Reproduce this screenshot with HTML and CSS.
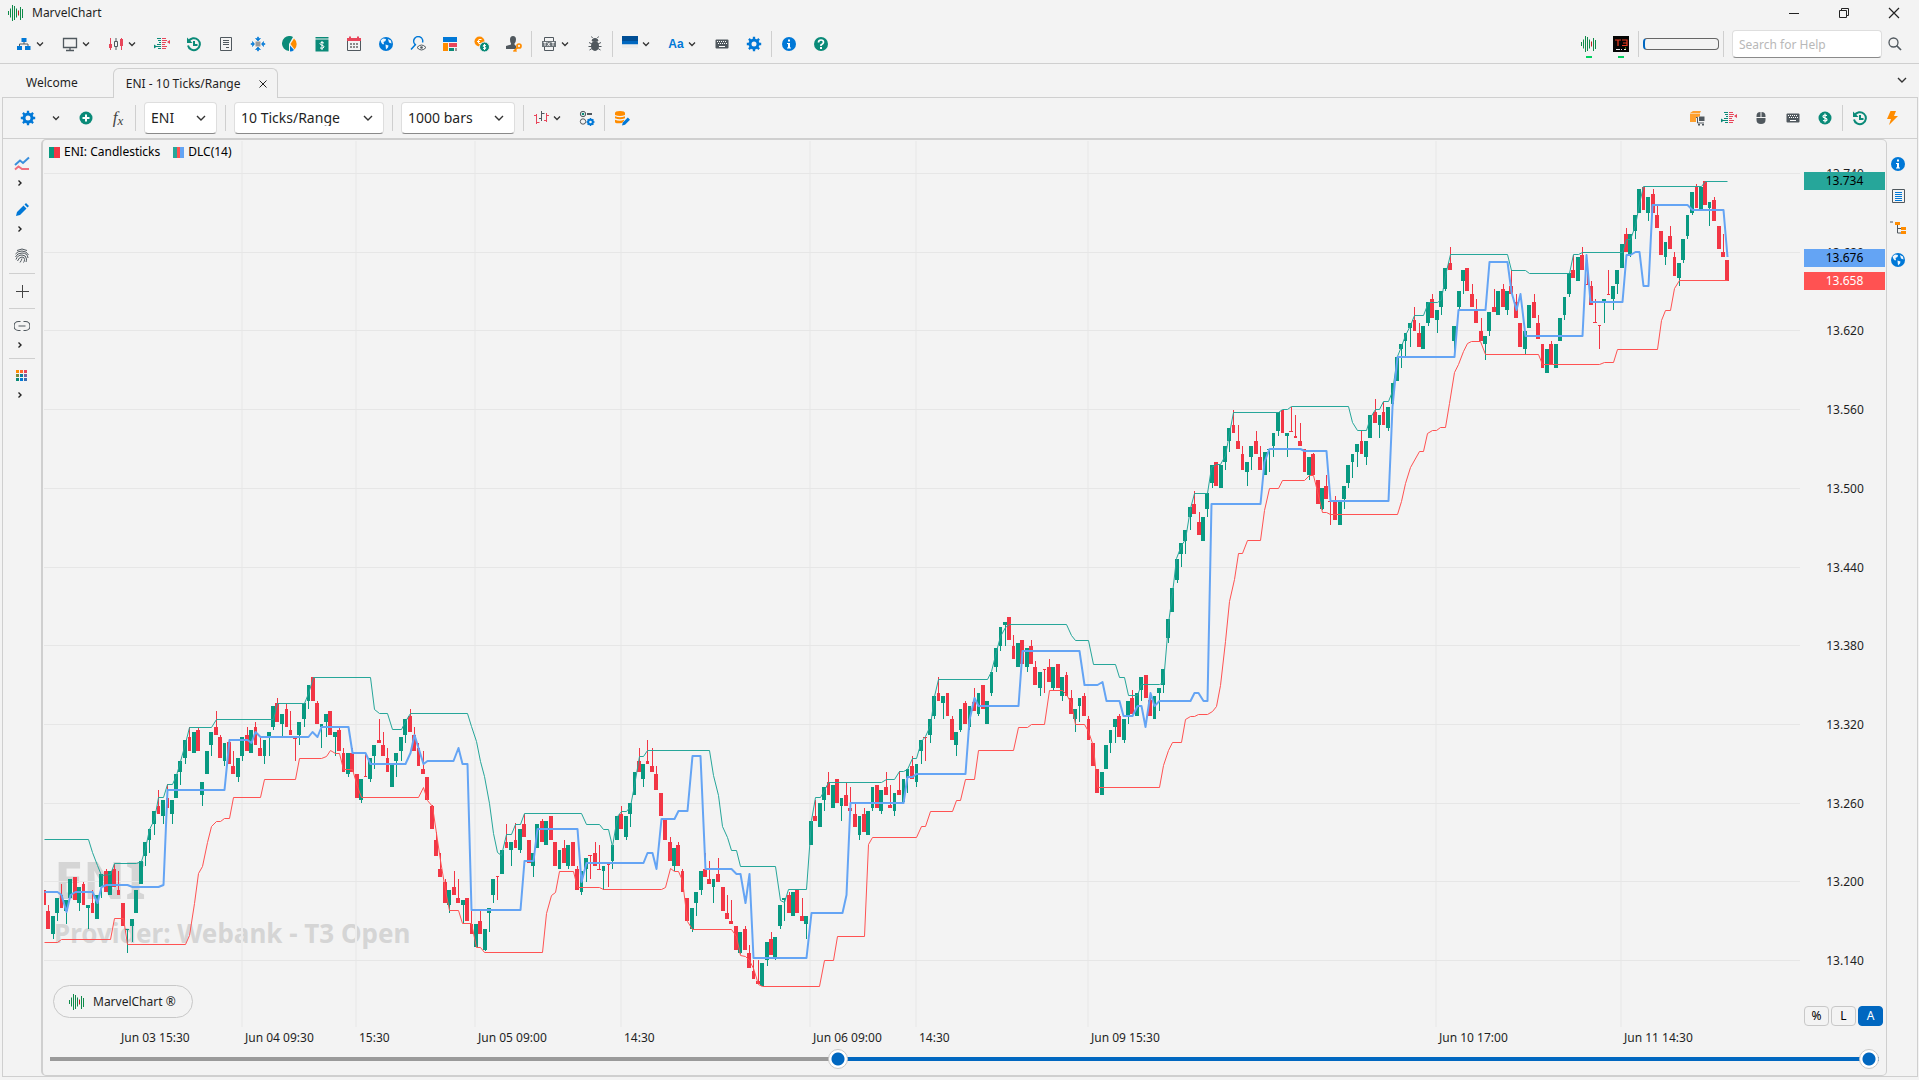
FILE: index.html
```html
<!DOCTYPE html>
<html lang="en">
<head>
<meta charset="utf-8">
<title>MarvelChart</title>
<link rel="stylesheet" href="styles.css">
</head>
<body>
<svg class="sprite" aria-hidden="true">
  <symbol id="wave" viewBox="0 0 16 16"><path d="M.5 6v4M2.500 3.500v9M4.500 0v16M6.500 1v14M8.500 3.500v9M12.500 2v13M14.500 4v9" stroke="#0f8a4a"/><path d="M10.500 5.500v5" stroke="#c02020"/></symbol>
  <symbol id="down" viewBox="0 0 8 8"><path d="M1 2.500 4 5.500 7 2.500" fill="none" stroke="#333" stroke-width="1.300"/></symbol>
  <symbol id="right" viewBox="0 0 8 8"><path d="M2.500 1.500 5 4 2.500 6.500" fill="none" stroke="#222" stroke-width="1.400"/></symbol>
  <symbol id="tree" viewBox="0 0 16 16"><path d="M5.500 2h5v4h-5zM1 10h5v4H1zM9 10h5.500v4H9z" fill="#0078d7"/><path d="M8 6v2M3.500 10V8h8.500v2" fill="none" stroke="#50585e"/></symbol>
  <symbol id="monitor" viewBox="0 0 16 16"><path d="M1.500 2.500h13v9h-13zM8 12v2M4 14.500h8" fill="none" stroke="#50585e" stroke-width="1.300"/></symbol>
  <symbol id="candles" viewBox="0 0 16 16"><path d="M2.500 2v12M13.500 2v12" stroke="#e8455a"/><path d="M1 8h3v4H1zM12 3h3v7h-3z" fill="#e8455a"/><path d="M6.500 5.500h3v5h-3zM8 2v3M8 11v3" fill="none" stroke="#50585e"/></symbol>
  <symbol id="depth" viewBox="0 0 16 16"><path d="M3 2.500h4M4 4.500h3M5 6.500h2M3 8.500h4M2 10.500h5M4 12.500h3" stroke="#0a8a78"/><path d="M8 2.500h4M8 4.500h5M8 6.500h4M8 8.500h3M8 10.500h5M8 12.500h4" stroke="#e8455a"/><path d="M0 8.500 3 10.500 0 12.500z" fill="#0a8a78"/><path d="M16 4 13 6 16 8z" fill="#e8455a"/></symbol>
  <symbol id="history" viewBox="0 0 16 16"><path d="M2.500 5.500A6 6 0 1 1 2 9.500M8 5v4h3.500" fill="none" stroke="#0a8a78" stroke-width="2"/><path d="M1 1.500V7h5.500z" fill="#0a8a78"/></symbol>
  <symbol id="doc" viewBox="0 0 16 16"><path d="M2.500 1.500h11v13h-11zM5 4.500h6M5 6.500h6M5 8.500h6M8 11.500h3" fill="none" stroke="#50585e"/></symbol>
  <symbol id="move" viewBox="0 0 16 16"><path d="M5.500 5.500h5v5h-5z" fill="#9a9a9a"/><path d="M8 5 5.500 2.500H7.500V1h1v1.500h2zM8 11l2.500 2.500H8.500V15h-1v-1.500h-2zM4.500 8 2.500 5.500V7.500H1v1h1.500v2zM11.500 8l2-2.500V7.500H15v1h-1.500v2z" fill="#0078d7" stroke="#0078d7" stroke-width=".6"/></symbol>
  <symbol id="pie" viewBox="0 0 16 16"><path d="M8 0a7.500 7.500 0 0 0-1 15V8l4-7Q9.500 0 8 0z" fill="#0a8a78"/><path d="M12 2.500 8.500 8l4 5.500a7.500 7.500 0 0 0-.5-11z" fill="#ff8c00"/><path d="M8 9.500V15.500q2.500 0 4-1.500z" fill="#0078d7"/></symbol>
  <symbol id="money" viewBox="0 0 16 16"><path d="M1.500 1h13v1.500h-13zM1.500 3.500h13v12h-13z" fill="#0a8a78"/><path d="M10 7Q6 5.500 6 7.500q0 1.300 2 1.700 2 .5 2 1.600Q10 13 6 12M8 5v9" fill="none" stroke="#fff"/></symbol>
  <symbol id="calendar" viewBox="0 0 16 16"><path d="M1.500 4.500h13v10h-13z" fill="none" stroke="#50585e"/><path d="M1 2h14v3H1zM3 .5h2v2H3zM11 .5h2v2h-2z" fill="#e8455a"/><path d="M4 7h2v2H4zM7 7h2v2H7zM10 7h2v2h-2zM4 10h2v2H4zM7 10h2v2H7zM10 10h2v2h-2z" fill="#8a8a8a"/></symbol>
  <symbol id="globe" viewBox="0 0 16 16"><circle cx="8" cy="8" r="7" fill="#0078d7"/><path d="M2.500 4.500 5 2.500l3 .5-.5 2L5.500 6 6 8l-1 .5L3.500 7zM7.500 8.500l3 1-.5 2L8 13.500zM10 3l3 1.500.5 3-2.500-1z" fill="#eef6fd"/></symbol>
  <symbol id="lookup" viewBox="0 0 16 16"><path d="M6 9A4.500 4.500 0 1 1 12.500 6.500M5.500 8.500 1 13.500" fill="none" stroke="#0078d7" stroke-width="1.500"/><path d="M7 11.500q4.500-5 9 0-4.500 5-9 0z" fill="#f3f3f3" stroke="#50585e"/><circle cx="11.500" cy="11.500" r="1.300" fill="#50585e"/></symbol>
  <symbol id="blocks" viewBox="0 0 16 16"><path d="M1 1h14v5H1z" fill="#0078d7"/><path d="M1 7h5v8H1z" fill="#ff8c00"/><path d="M7 7h8v4H7z" fill="#e8455a"/><path d="M7 12h5v3H7z" fill="#0a8a78"/><path d="M13 12h2v3h-2z" fill="#999"/></symbol>
  <symbol id="coins" viewBox="0 0 16 16"><circle cx="5.500" cy="5.500" r="5" fill="#ff8c00"/><path d="M7.500 3.500Q4 2.500 4 5.500t3.500 2M3 5.500h3" fill="none" stroke="#fff"/><circle cx="10.500" cy="11" r="5" fill="#0a8a78" stroke="#f3f3f3"/><path d="M12 9.500Q9 8.500 9 10q0 .8 1.500 1T12 12q0 1.500-3 .5M10.500 8v6" fill="none" stroke="#fff"/></symbol>
  <symbol id="userkey" viewBox="0 0 16 16"><path d="M4 3.500a3 3.500 0 0 1 6 0Q10 6 8.500 7.500v1L10 10v3H0v-3l5-1.500v-1Q4 6 4 3.500z" fill="#50585e"/><circle cx="13" cy="10" r="2" fill="none" stroke="#ff8c00" stroke-width="1.700"/><path d="m11.500 11.500-4 4M9 14l1.500 1.500" stroke="#ff8c00" stroke-width="1.700"/></symbol>
  <symbol id="textfile" viewBox="0 0 16 16"><path d="M3.500 5V1.500h9V5M3.500 11v3.500h9V11" fill="none" stroke="#50585e"/><path d="M1 5h14v6H1z" fill="#6b7277"/><path d="M2.500 6.500h3M4 6.500V10M6.500 6.500 9 10M9 6.500 6.500 10M10.500 6.500h3M12 6.500V10" stroke="#fff" stroke-width=".9"/></symbol>
  <symbol id="bug" viewBox="0 0 16 16"><ellipse cx="8" cy="10" rx="4" ry="5" fill="#50585e"/><path d="M5 5a3 2.500 0 0 1 6 0zM5.500 2 4.500.500M10.500 2l1-1.500M2 6.500l3 1.500M14 6.500l-3 1.500M1.500 10.500h13M2.500 14 5 12.500M13.500 14l-2.500-1.500" fill="#50585e" stroke="#50585e"/></symbol>
  <symbol id="skin" viewBox="0 0 16 12"><path d="M0 0h16v5H0z" fill="#004e95"/><path d="M0 5h16v3.500H0z" fill="#0067c0"/><path d="M0 8.500h16V12H0z" fill="#ececec"/></symbol>
  <symbol id="keyboard" viewBox="0 0 16 16"><rect x="1.500" y="3.500" width="13" height="9" rx="1" fill="#50585e"/><path d="M3 5.500h10M4 7.500h9" stroke="#fff" stroke-dasharray="1 1"/><path d="M5 10.500h6" stroke="#fff"/></symbol>
  <symbol id="gear" viewBox="0 0 16 16"><circle cx="8" cy="8" r="4" fill="none" stroke="#0078d7" stroke-width="3"/><path d="M8 .8v3M8 12.200v3M.8 8h3M12.200 8h3M2.900 2.900 5 5M11 11l2.100 2.100M2.900 13.100 5 11M11 5l2.100-2.100" stroke="#0078d7" stroke-width="2.300"/></symbol>
  <symbol id="info" viewBox="0 0 16 16"><circle cx="8" cy="8" r="7" fill="#0078d7"/><path d="M7 3.500h2v2H7zM6 7h3v4.500h1v1H6v-1h1V8H6z" fill="#fff"/></symbol>
  <symbol id="help" viewBox="0 0 16 16"><circle cx="8" cy="8" r="7" fill="#0a8a78"/><path d="M5.500 6.500Q5.500 4 8 4t2.500 2.200Q10.500 7.500 8 9v1" fill="none" stroke="#fff" stroke-width="1.700"/><path d="M7 11h2v2H7z" fill="#fff"/></symbol>
  <symbol id="provider" viewBox="0 0 16 16"><path d="M0 0h16v16H0z" fill="#050505"/><path d="M2 4h6M5 4v6M9 4h5v5.500H9M10 7h4" fill="none" stroke="#e83a20" stroke-width="1.200"/><path d="M3 13.500h4M8 13.500h1M11 13.500h2" stroke="#eee"/><path d="M12 12h1" stroke="#9bd000"/></symbol>
  <symbol id="search" viewBox="0 0 16 16"><circle cx="6.500" cy="6.500" r="4.500" fill="none" stroke="#50585e" stroke-width="1.300"/><path d="m9.500 9.500 4.500 4.500" stroke="#50585e" stroke-width="1.700"/></symbol>
  <symbol id="plus" viewBox="0 0 16 16"><circle cx="8" cy="8" r="6.500" fill="#0a8a78"/><path d="M8 4.500v7M4.500 8h7" stroke="#fff" stroke-width="2"/></symbol>
  <symbol id="ohlc" viewBox="0 0 16 16"><path d="M3.500 4v10M1 5.500h2M4 12.500h2.500M13.500 3v9M11 10.500h2.500M14 5.500h2" stroke="#e8455a"/><path d="M8.500 1v10M6 8.500h2M9 3.500h2.500" stroke="#50585e"/></symbol>
  <symbol id="options" viewBox="0 0 16 16"><circle cx="4" cy="4" r="2.700" fill="none" stroke="#50585e"/><circle cx="4" cy="4" r="1.300" fill="#0a8a78"/><circle cx="4" cy="11.500" r="2.700" fill="none" stroke="#50585e"/><path d="M8 4h5" stroke="#50585e" stroke-width="2"/><circle cx="11.500" cy="12" r="2.300" fill="none" stroke="#0078d7" stroke-width="2"/><path d="M11.500 8v1.500M11.500 14.500V16M7.500 12H9M14 12h1.500M8.700 9.200l1.100 1.100M13.200 13.700l1.100 1.100M8.700 14.800l1.100-1.100M13.200 10.300l1.100-1.100" stroke="#0078d7" stroke-width="1.500"/></symbol>
  <symbol id="dbedit" viewBox="0 0 16 16"><path d="M1 3Q1 1 6 1t5 2v2Q6 7 1 5zM1 6.300q5 2 10 0v2q-5 2-10 0zM1 9.800q5 2 9 0v1L8 13Q1 14 1 12z" fill="#ff8c00"/><path d="m8 15.500.8-3 5-5 2.200 2.200-5 5z" fill="#0078d7"/></symbol>
  <symbol id="order" viewBox="0 0 16 16"><path d="M1 3 4 1h8l-1 2v3L7 8v4H1z" fill="#ffa02e"/><path d="M1 3.500h10" stroke="#f8d0a0"/><path d="M7 7.500h1.500V13H15" fill="none" stroke="#50585e"/><path d="M10 6.500h5.500V11H10z" fill="#50585e"/><path d="M9 14h2v1.500H9zM13 14h2v1.500h-2z" fill="#50585e"/></symbol>
  <symbol id="mouse" viewBox="0 0 16 16"><path d="M3.500 7V6Q3.500 2 7.500 2v5zM8.500 2q4 0 4 4v1h-4zM3.500 8h9v2q0 4-4.500 4T3.500 10z" fill="#50585e"/></symbol>
  <symbol id="dollar" viewBox="0 0 16 16"><circle cx="8" cy="8" r="6.500" fill="#0a8a78"/><path d="M10 5.500Q6 4.500 6 6.500 6 7.600 8 8t2 1.700q0 1.800-4 .8M8 3.500v9" fill="none" stroke="#fff" stroke-width="1.200"/></symbol>
  <symbol id="bolt" viewBox="0 0 16 16"><path d="M6.500 1H12L10 6h4L5 15l2-6H3z" fill="#ff8c00"/></symbol>
  <symbol id="lines" viewBox="0 0 16 16"><path d="M1 9 6 4.500 9 7l6-5.500" fill="none" stroke="#3a8fdc" stroke-width="2"/><path d="M1 13.500 4.500 10.500 8 13h7" fill="none" stroke="#f06e7e" stroke-width="2"/></symbol>
  <symbol id="pencil" viewBox="0 0 16 16"><path d="m2 14 1-4 6.500-6.500 3 3L6 13zM10.500 2.500 12 1l3 3-1.500 1.500z" fill="#0078d7"/></symbol>
  <symbol id="finger" viewBox="0 0 16 16"><path d="M3 2.500q5-3 10 0M1.500 6Q3.500 3 8 3t6.500 4M1.500 9Q3 5 8 5q5.500 0 6 5M2 11.500Q3.500 7 8 7q4 0 4.500 4 0 2-.5 3M3.500 13Q5 9 8 9q2.500 0 2.500 2.500 0 2-1 3M6 14.500q1.500-2 2-4" fill="none" stroke="#50585e"/></symbol>
  <symbol id="cross" viewBox="0 0 16 16"><path d="M8.500 2v13M2 8.500h13" stroke="#444"/></symbol>
  <symbol id="link" viewBox="0 0 16 16"><path d="M6.500 3.500h-2a4.500 4.500 0 0 0 0 9h2M9.500 3.500h2a4.500 4.500 0 0 1 0 9h-2M4.500 8h7" fill="none" stroke="#50585e" stroke-width="1.200"/></symbol>
  <symbol id="palette" viewBox="0 0 16 16"><path d="M2 2h3v3H2z" fill="#ff8c00"/><path d="M6 2h3v3H6z" fill="#ff6a2b"/><path d="M10 2h3v3h-3z" fill="#e8455a"/><path d="M2 6h3v3H2z" fill="#7d8b3c"/><path d="M6 6h3v3H6z" fill="#0a809a"/><path d="M10 6h3v3h-3z" fill="#7a62a0"/><path d="M2 10h3v3H2z" fill="#0a8a78"/><path d="M6 10h3v3H6z" fill="#0078d7"/><path d="M10 10h3v3h-3z" fill="#3a6db0"/></symbol>
  <symbol id="list" viewBox="0 0 16 16"><path d="M2.500 1.500h12v13h-12z" fill="none" stroke="#50585e"/><path d="M5 4.500h7M5 6.500h7M5 8.500h7M5 10.500h7M5 12.500h7" stroke="#0078d7"/></symbol>
  <symbol id="hierarchy" viewBox="0 0 16 16"><path d="M0 2h3M7.500 5v8H11M7.500 8.500H11" fill="none" stroke="#50585e"/><path d="M5 2h5v3H5zM11 7h5v3h-5zM11 11h5v3h-5z" fill="#ff8c00"/></symbol>
</svg>

<header class="titlebar">
  <svg class="icon"><use href="#wave"/></svg>
  <h1 class="app-name">MarvelChart</h1>
  <button class="win-btn" aria-label="Minimize"><svg class="icon" viewBox="0 0 16 16"><path d="M3 8.500h10" stroke="#222"/></svg></button>
  <button class="win-btn" aria-label="Restore"><svg class="icon" viewBox="0 0 16 16"><path d="M3.500 5.500h7v7h-7zM5.500 5V3.500h7v7H11" fill="none" stroke="#222"/></svg></button>
  <button class="win-btn" aria-label="Close"><svg class="icon" viewBox="0 0 16 16"><path d="m3 3 10 10M13 3 3 13" stroke="#222" stroke-width="1.200"/></svg></button>
</header>

<nav class="toolbar main-tools" aria-label="Main">
  <button class="tool drop" aria-label="Workspace"><svg class="icon"><use href="#tree"/></svg><svg class="chev"><use href="#down"/></svg></button>
  <button class="tool drop" aria-label="Display"><svg class="icon"><use href="#monitor"/></svg><svg class="chev"><use href="#down"/></svg></button>
  <button class="tool drop" aria-label="Charts"><svg class="icon"><use href="#candles"/></svg><svg class="chev"><use href="#down"/></svg></button>
  <button class="tool" aria-label="Market depth"><svg class="icon"><use href="#depth"/></svg></button>
  <button class="tool" aria-label="History"><svg class="icon"><use href="#history"/></svg></button>
  <button class="tool" aria-label="Log"><svg class="icon"><use href="#doc"/></svg></button>
  <button class="tool" aria-label="Arrange"><svg class="icon"><use href="#move"/></svg></button>
  <button class="tool" aria-label="Portfolio"><svg class="icon"><use href="#pie"/></svg></button>
  <button class="tool" aria-label="Account"><svg class="icon"><use href="#money"/></svg></button>
  <button class="tool" aria-label="Calendar"><svg class="icon"><use href="#calendar"/></svg></button>
  <button class="tool" aria-label="Web"><svg class="icon"><use href="#globe"/></svg></button>
  <button class="tool" aria-label="Symbol lookup"><svg class="icon"><use href="#lookup"/></svg></button>
  <button class="tool" aria-label="Heat map"><svg class="icon"><use href="#blocks"/></svg></button>
  <button class="tool" aria-label="Currencies"><svg class="icon"><use href="#coins"/></svg></button>
  <button class="tool" aria-label="Credentials"><svg class="icon"><use href="#userkey"/></svg></button>
  <span class="sep"></span>
  <button class="tool drop" aria-label="Text files"><svg class="icon"><use href="#textfile"/></svg><svg class="chev"><use href="#down"/></svg></button>
  <button class="tool" aria-label="Debug"><svg class="icon"><use href="#bug"/></svg></button>
  <span class="sep"></span>
  <button class="tool drop" aria-label="Skin"><svg class="icon skin"><use href="#skin"/></svg><svg class="chev"><use href="#down"/></svg></button>
  <button class="tool drop font-tool"><span class="aa">Aa</span><svg class="chev"><use href="#down"/></svg></button>
  <button class="tool" aria-label="Shortcuts"><svg class="icon"><use href="#keyboard"/></svg></button>
  <button class="tool" aria-label="Settings"><svg class="icon"><use href="#gear"/></svg></button>
  <span class="sep"></span>
  <button class="tool" aria-label="About"><svg class="icon"><use href="#info"/></svg></button>
  <button class="tool" aria-label="Help"><svg class="icon"><use href="#help"/></svg></button>
  <div class="spacer"></div>
  <button class="tool online" aria-label="MarvelChart feed"><svg class="icon"><use href="#wave"/></svg></button>
  <button class="tool online" aria-label="T3 feed"><svg class="icon"><use href="#provider"/></svg></button>
  <span class="sep"></span>
  <div class="progress" role="progressbar" aria-label="Loading" aria-valuenow="2"></div>
  <span class="sep"></span>
  <input class="search" type="search" placeholder="Search for Help" aria-label="Search for Help">
  <button class="tool find" aria-label="Search"><svg class="icon"><use href="#search"/></svg></button>
</nav>

<div class="tabs">
  <button class="tab">Welcome</button>
  <div class="tab active"><button class="tab-label">ENI - 10 Ticks/Range</button><button class="tab-close" aria-label="Close tab"><svg class="chev" viewBox="0 0 8 8"><path d="m.5.5 7 7M7.500.5l-7 7" stroke="#222"/></svg></button></div>
  <div class="spacer"></div>
  <button class="tool tab-list" aria-label="All tabs"><svg class="icon" viewBox="0 0 8 8"><path d="M2 3 4 5 6 3" fill="none" stroke="#333" stroke-width=".7"/></svg></button>
</div>

<main class="panel">
  <nav class="toolbar chart-tools" aria-label="Chart">
    <button class="tool" aria-label="Chart settings"><svg class="icon"><use href="#gear"/></svg></button>
    <button class="tool narrow" aria-label="More settings"><svg class="chev"><use href="#down"/></svg></button>
    <button class="tool" aria-label="Add"><svg class="icon"><use href="#plus"/></svg></button>
    <button class="tool fx" aria-label="Functions"><i>f</i><i class="sub">x</i></button>
    <span class="sep"></span>
    <label class="combo symbol"><select aria-label="Symbol"><option>ENI</option></select><svg class="icon" viewBox="0 0 8 8"><path d="M2 3 4 5 6 3" fill="none" stroke="#333" stroke-width=".7"/></svg></label>
    <span class="sep"></span>
    <label class="combo interval"><select aria-label="Interval"><option>10 Ticks/Range</option></select><svg class="icon" viewBox="0 0 8 8"><path d="M2 3 4 5 6 3" fill="none" stroke="#333" stroke-width=".7"/></svg></label>
    <span class="sep"></span>
    <label class="combo count"><select aria-label="Bars"><option>1000 bars</option></select><svg class="icon" viewBox="0 0 8 8"><path d="M2 3 4 5 6 3" fill="none" stroke="#333" stroke-width=".7"/></svg></label>
    <span class="sep"></span>
    <button class="tool drop" aria-label="Bar style"><svg class="icon"><use href="#ohlc"/></svg><svg class="chev"><use href="#down"/></svg></button>
    <button class="tool" aria-label="Options"><svg class="icon"><use href="#options"/></svg></button>
    <span class="sep"></span>
    <button class="tool" aria-label="Edit data"><svg class="icon"><use href="#dbedit"/></svg></button>
    <div class="spacer"></div>
    <button class="tool" aria-label="Orders"><svg class="icon"><use href="#order"/></svg></button>
    <button class="tool" aria-label="Depth"><svg class="icon"><use href="#depth"/></svg></button>
    <button class="tool" aria-label="Mouse trading"><svg class="icon"><use href="#mouse"/></svg></button>
    <button class="tool" aria-label="Keyboard trading"><svg class="icon"><use href="#keyboard"/></svg></button>
    <button class="tool" aria-label="Positions"><svg class="icon"><use href="#dollar"/></svg></button>
    <span class="sep"></span>
    <button class="tool" aria-label="Replay"><svg class="icon"><use href="#history"/></svg></button>
    <button class="tool" aria-label="Fast trading"><svg class="icon"><use href="#bolt"/></svg></button>
  </nav>

  <div class="workspace">
    <nav class="rail left-rail" aria-label="Drawing">
      <div class="rail-group">
        <button class="rail-btn" aria-label="Trend lines"><svg class="icon"><use href="#lines"/></svg><svg class="chev"><use href="#right"/></svg></button>
        <button class="rail-btn" aria-label="Pencil"><svg class="icon"><use href="#pencil"/></svg><svg class="chev"><use href="#right"/></svg></button>
        <button class="rail-btn" aria-label="Patterns"><svg class="icon"><use href="#finger"/></svg></button>
      </div>
      <span class="rail-sep"></span>
      <button class="rail-btn" aria-label="Crosshair"><svg class="icon"><use href="#cross"/></svg></button>
      <span class="rail-sep"></span>
      <button class="rail-btn" aria-label="Link"><svg class="icon"><use href="#link"/></svg><svg class="chev"><use href="#right"/></svg></button>
      <span class="rail-sep"></span>
      <button class="rail-btn" aria-label="Colours"><svg class="icon"><use href="#palette"/></svg><svg class="chev"><use href="#right"/></svg></button>
    </nav>

    <section class="chart">
      <div class="plot">
        <div class="watermark"><p class="mark-symbol">ENI</p><p class="mark-provider">Provider: Webank - T3 Open</p></div>
        <svg class="canvas" id="canvas" viewBox="43 140 1761 887" preserveAspectRatio="none"></svg>
        <div class="legend">
          <span class="swatch candle-swatch"></span><span class="legend-name">ENI: Candlesticks</span>
          <span class="swatch band-swatch"></span><span>DLC(14)</span>
        </div>
        <button class="brand"><svg class="icon"><use href="#wave"/></svg>MarvelChart ®</button>
      </div>
      <div class="price-axis" id="prices">
        <div class="scale-modes"><button class="mode">%</button><button class="mode">L</button><button class="mode on">A</button></div>
      </div>
      <div class="time-axis" id="times"></div>
      <div class="range">
        <input type="range" min="0" max="1000" value="430" aria-label="First bar">
        <input type="range" min="0" max="1000" value="1000" aria-label="Last bar">
      </div>
    </section>

    <nav class="rail right-rail" aria-label="Panels">
      <button class="side-btn" aria-label="Information"><svg class="icon"><use href="#info"/></svg></button>
      <button class="side-btn" aria-label="List"><svg class="icon"><use href="#list"/></svg></button>
      <button class="side-btn" aria-label="Objects"><svg class="icon"><use href="#hierarchy"/></svg></button>
      <button class="side-btn" aria-label="Web"><svg class="icon"><use href="#globe"/></svg></button>
    </nav>
  </div>
</main>
<script src="chart.js"></script>
</body>
</html>
```
FILE: styles.css
```css
* { box-sizing: border-box; }
body {
  margin: 0;
  height: 100vh;
  display: flex;
  flex-direction: column;
  overflow: hidden;
  background: #f3f3f3;
  color: #1f1f1f;
  font: 12px/16px "Noto Sans", "Open Sans", sans-serif;
}
button, input, select { font: inherit; color: inherit; }
button { border: 0; padding: 0; background: none; }
svg { display: block; }
.sprite { display: none; }
.icon { width: 16px; height: 16px; flex: none; }
.chev { width: 8px; height: 8px; flex: none; }
.spacer { flex: 1; }

.titlebar { display: flex; align-items: center; height: 25px; flex: none; padding-left: 8px; }
.app-name { flex: 1; margin: 0 0 0 8px; font-size: 12px; font-weight: 400; }
.win-btn { width: 50px; height: 25px; display: flex; align-items: center; justify-content: center; }

.toolbar { display: flex; align-items: center; flex: none; border-bottom: 1px solid #cfcfcf; }
.tool { width: 32px; height: 32px; flex: none; display: flex; align-items: center; justify-content: center; }
.drop { width: 46px; justify-content: flex-start; gap: 4px; padding-left: 8px; }
.sep { width: 1px; height: 26px; margin: 0 1px; flex: none; background: #cfcfcf; }
.main-tools { height: 39px; padding: 0 16px 0 8px; }
.skin { height: 12px; margin-bottom: 4px; }
.aa { width: 16px; font-weight: 700; color: #0078d7; font-family: "Liberation Sans", Arial, sans-serif; }
.online { position: relative; }
.online::after { content: ""; position: absolute; left: 13px; bottom: 2px; width: 6px; height: 2px; background: #00d060; }
.progress { width: 76px; height: 12px; margin: 0 3px; border: 1px solid #666; border-left: 2px solid #0067c0; border-radius: 4px; }
.search { width: 150px; height: 28px; margin-left: 7px; padding: 0 6px; border: 1px solid #dedede; border-bottom-color: #8a8a8a; border-radius: 4px; background: #fff; outline: 0; }
.search::placeholder { color: #b8b8b8; opacity: 1; }
.find { width: 21px; justify-content: flex-end; }

.tabs { display: flex; align-items: flex-end; flex: none; height: 33px; padding: 0 1px; }
.tab { height: 29px; padding: 0 35px 0 25px; }
.active { display: flex; align-items: center; position: relative; z-index: 1; height: 30px; margin-bottom: -1px; padding: 0 10px 0 12px; border: 1px solid #cfcfcf; border-bottom: 0; border-radius: 6px 6px 0 0; background: #f3f3f3; }
.tab-close { margin-left: 18px; }
.tab-list { margin-bottom: 1px; }

.panel { flex: 1; min-height: 0; display: flex; flex-direction: column; margin: 0 1px 3px 2px; border: 1px solid #cfcfcf; }
.chart-tools { height: 41px; padding: 0 9px; }
.narrow { width: 26px; padding-right: 2px; }
.fx { font: italic 17px/20px "Liberation Serif", serif; color: #444; }
.fx .sub { font-size: 13px; padding-top: 6px; }
.combo { position: relative; margin: 0 7px; display: block; height: 32px; }
.combo select { width: 100%; height: 100%; appearance: none; padding: 0 6px; border: 1px solid #dedede; border-bottom-color: #8a8a8a; border-radius: 4px; background: #fff; font-size: 14px; }
.combo .icon { position: absolute; right: 8px; top: 8px; pointer-events: none; }
.symbol { width: 73px; }
.interval { width: 150px; }
.count { width: 114px; }

.workspace { flex: 1; min-height: 0; display: flex; }
.rail { flex: none; display: flex; flex-direction: column; }
.left-rail { width: 38px; padding-top: 11px; }
.right-rail { width: 30px; padding-top: 9px; align-items: center; }
.rail-group { display: flex; flex-direction: column; gap: 4px; }
.rail-btn { width: 37px; display: flex; flex-direction: column; align-items: center; gap: 7px; padding: 6px 0 5px; }
.rail-btn .chev { margin-right: 4px; }
.rail-sep { height: 1px; margin: 4px 6px 3px; background: #cfcfcf; }
.side-btn { width: 30px; height: 32px; display: flex; align-items: center; justify-content: center; margin-left: -9px; }

.chart {
  flex: 1;
  min-width: 0;
  display: grid;
  grid-template: minmax(0, 1fr) 22px 26px / minmax(0, 1fr) 82px;
  border: 1px solid #cfcfcf;
  border-left-width: 2px;
  border-radius: 5px;
}
.plot { position: relative; }
.canvas { position: absolute; inset: 0; width: 100%; height: 100%; }
.legend { position: absolute; left: 6px; top: 4px; display: flex; align-items: center; color: #000; }
.swatch { width: 11px; height: 11px; margin-right: 4px; }
.legend-name { margin-right: 13px; }
.candle-swatch { background: linear-gradient(90deg, #089981 50%, #f23645 50%); }
.band-swatch { background: linear-gradient(90deg, #26a69a 33%, #ff5252 33% 66%, #64a4f4 66%); }
.watermark { position: absolute; left: 11px; bottom: 76px; color: #d5d5d5; font-weight: 700; }
.watermark p { margin: 0; white-space: nowrap; }
.mark-symbol { font-size: 52px; line-height: 72px; }
.mark-provider { font-size: 26px; line-height: 36px; }
.brand { position: absolute; left: 10px; bottom: 9px; height: 33px; display: flex; align-items: center; gap: 8px; padding: 0 16px 0 15px; border: 1px solid #c8c8c8; border-radius: 17px; background: #f3f3f3; }
.price-axis { position: relative; }
.price, .tag { position: absolute; left: 0; right: 0; height: 18px; line-height: 18px; margin-top: -8px; text-align: center; }
.tag { right: 1px; margin-top: -9px; color: #000; }
.tag-upper { background: #26a69a; }
.tag-mid { background: #64a4f4; }
.tag-lower { background: #ff5252; color: #fff; }
.scale-modes { position: absolute; left: 0; bottom: 1px; display: flex; gap: 2px; }
.mode { width: 25px; height: 20px; border: 1px solid #c8c8c8; border-radius: 4px; color: #000; }
.mode.on { background: #0067c0; border-color: #0067c0; color: #fff; }
.time-axis { position: relative; grid-column: 1; }
.time { position: absolute; top: 3px; margin-left: 3px; white-space: nowrap; }
.range { grid-column: 1 / -1; display: grid; align-content: start; margin: 0 7px; background: linear-gradient(90deg, #9a9a9a 43%, #0067c0 43%) 0 8px / 100% 4px no-repeat; }
.range input { grid-area: 1 / 1; width: 100%; height: 20px; margin: 0; appearance: none; background: none; pointer-events: none; }
.range input::-webkit-slider-thumb { appearance: none; pointer-events: auto; width: 20px; height: 20px; border: 1px solid #c8c8c8; border-radius: 50%; background: radial-gradient(circle, #0067c0 6px, #fff 7px); }
```
FILE: chart.js
```js
// Series are stored in blocks. Each block has an origin on the chart and
// holds its values in thirds of a chart unit.
// bars: colour, centre, high, body top, body bottom, low
const blocks = [
  { x: 0, y: 660,
    bars: `r133 690 690 735 735,r145 735 753 807 807,g159 768 768 822 837,g171 714 714 759 783,r185 672 705 744 744,g198 720 720 753 792,g211 657 657 714 714,r225 651 651 720 720,g237 681 681 729 753,r251 666 672 735 735,g264 735 735 744 807,r278 690 729 759 759,g291 705 705 777 777,g303 642 642 681 714,r318 627 632 696 696,g330 632 632 705 705,r343 612 627 681 681,r356 632 690 705 705,r369 729 729 798 798,g382 807 807 810 879,g396 777 777 798 846,g409 690 690 759 759,g423 603 603 672 672,g436 546 546 588 618,g449 507 507 540 579,g462 453 453 492 525,r476 390 438 462 462,g489 420 420 468 492,r503 372 414 444 444,g516 420 420 462 492,g528 342 342 414 414,g541 303 303 336 375,g555 240 240 294 312,r569 201 231 273 273,g582 216 216 279 279,r594 201 210 273 273,g607 366 366 405 438,g621 273 273 342 342,g634 216 216 255 288,r648 153 201 225 225,r660 225 231 294 294,g674 249 249 303 318,r687 237 246 312 312,r700 273 318 342 342,g714 294 294 351 366,g727 231 231 288 303,r741 201 225 273 273,g753 210 210 279 279,r767 186 201 255 255,r780 231 264 288 288,g794 240 240 288 312,g807 216 216 231 288,g819 138 138 201 210,r832 114 130 186 186,g846 162 162 192 231,r860 132 147 201 201,r872 153 210 225 225,r886 231 234 237 303,g898 186 186 225 255,g912 129 129 177 201,g926 75 75 123 147,r939 51 51 123 123,r951 123 129 192 192,g965 192 192 201 264,g978 162 162 186 231,r991 153 153 225 225,g1005 216 216 231 288,r1017 204 210 273 273,r1031 264 279 336 336,g1044 279 279 342 351,r1057 264 279 336 336,r1071 342 342 414 414,g1083 357 357 420 429,r1097 282 348 351 351,g1111 294 294 357 366,g1123 255 255 288 327,r1137 177 240 249 249,r1150 216 255 288 288,r1163 264 294 336 336,g1176 312 312 381 381,g1189 279 279 303 351,g1203 231 231 273 303,g1216 177 177 225 249,r1230 147 168 216 216,r1242 201 225 273 273,r1256 249 264 318 318,r1269 273 327 342 342,r1282 351 351 420 420,r1296 435 438 507 507,r1308 516 540 588 588,r1321 579 627 651 651,r1335 657 666 729 729,g1348 690 690 735 759,r1362 632 681 705 705,r1375 657 714 729 729,g1389 720 720 735 789,r1401 714 714 783 783,r1415 750 792 822 822`,
    upper: '133,539 265,539 278,577 291,616 303,645 330,642 343,610 410,610 423,603 436,565 449,507 462,477 476,413 489,412 503,373 516,373 528,345 541,305 555,250 569,201 634,201 648,177 819,177 832,130 913,130 926,100 939,51 1110,51 1124,147 1137,161 1163,161 1176,208 1203,208 1216,185 1230,161 1402,161 1415,200',
    lower: '133,847 172,847 185,838 331,838 343,775 369,775 383,854 556,854 568,825 582,730 596,640 608,618 621,548 634,500 648,484 661,484 674,476 687,476 700,413 780,413 793,358 886,358 899,295 965,295 978,288 991,272 1005,280 1018,280 1031,327 1057,327 1071,380 1084,413 1256,413 1269,382 1283,422 1296,438 1308,520 1321,600 1335,690 1348,751 1375,751 1388,790 1415,790',
    mid: '133,696 172,696 185,705 198,757 211,705 225,696 278,696 291,728 303,681 318,674 383,674 396,681 476,681 489,674 502,390 674,390 687,240 741,240 753,248 767,217 780,232 925,232 938,217 952,232 965,201 1044,201 1057,279 1097,279 1110,311 1216,311 1230,280 1242,226 1256,265 1269,311 1282,303 1361,303 1374,265 1388,311 1402,311' },
  { x: 400, y: 660,
    bars: `g228 792 792 861 861,r240 753 783 822 822,g255 807 807 870 873,g267 744 744 759 816,g280 657 657 705 729,r293 648 648 651 720,g307 570 570 642 642,r320 492 546 564 564,g334 546 546 570 618,r347 489 540 564 564,g360 507 507 570 579,r373 462 492 531 531,r387 540 540 609 609,g399 579 579 618 651,g412 492 492 564 564,r426 477 483 546 546,g439 483 483 555 555,r453 468 468 540 540,r465 546 546 618 618,g479 570 570 627 627,r492 540 564 609 609,g505 555 555 618 627,r519 546 546 618 618,r531 618 627 690 690,g545 633 633 696 705,g558 594 594 627 666,r571 585 585 588 657,r585 546 579 618 618,r598 555 627 630 630,g611 618 618 633 690,r626 612 612 614 681,g638 555 555 603 627,g651 468 468 540 540,r664 438 462 507 507,g678 468 468 531 540,g690 429 429 462 501,g704 336 336 405 405,r717 264 303 336 336,g730 312 312 357 381,r743 240 303 312 312,r756 264 318 336 336,r769 318 342 390 390,r783 399 399 468 468,r796 474 477 540 540,r810 531 546 603 603,g822 564 564 618 633,r835 546 555 618 618,r848 627 633 696 696,r862 714 714 783 783,g876 744 744 807 816,g888 696 696 729 768,g903 633 633 690 705,r915 579 627 651 651,r928 603 657 672 672,g941 657 657 681 729,r955 594 642 666 666,r969 681 681 753 753,r981 705 759 777 777,r994 720 783 792 792,r1008 798 798 870 870,g1021 816 816 879 882,r1035 798 807 870 870,r1047 855 879 924 924,r1061 900 933 957 957,r1074 900 963 972 972,g1087 909 909 978 978,g1101 846 846 900 918,r1113 816 837 885 885,g1126 831 831 891 900,g1140 735 735 798 807,g1153 714 714 720 783,r1167 696 705 759 759,g1179 696 696 768 768,r1192 690 690 759 759,r1206 714 768 783 783,g1219 768 768 792 837,g1233 483 483 555 555`,
    upper: '228,245 241,305 254,350 267,430 280,520 293,577 305,585 320,524 334,524 347,492 360,492 373,461 545,461 558,492 598,492 611,508 625,508 638,558 651,468 664,453 678,453 690,440 704,375 717,288 730,288 743,271 928,271 941,345 955,405 968,500 981,532 994,571 1008,571 1021,618 1127,618 1140,720 1153,727 1166,689 1219,689',
    lower: '228,862 241,862 254,877 427,877 440,760 453,705 466,696 479,633 519,633 532,681 598,681 611,689 783,689 796,681 810,626 822,633 835,633 848,660 862,785 876,807 994,807 1008,830 1021,885 1035,888 1048,900 1061,925 1074,972 1087,980 1259,980 1272,902 1299,902 1312,830 1392,830',
    mid: '215,751 361,751 373,603 400,603 412,508 532,508 545,666 558,609 730,609 743,579 756,579 769,626 783,477 822,477 835,453 862,453 876,288 902,288 915,626 994,626 1008,641 1021,641 1035,728 1048,641 1061,894 1219,894 1233,760 1326,760 1339,705' },
  { x: 800, y: 580,
    bars: `r45 660 708 723 723,g60 669 669 741 741,g72 621 621 660 693,r86 576 606 645 645,g99 615 615 684 684,r111 597 597 669 669,g125 654 654 678 723,r138 606 645 678 678,r151 621 684 693 693,r165 672 702 741 741,g179 708 708 765 780,r192 684 702 756 756,g204 693 693 765 765,g218 621 621 684 693,r231 615 615 684 684,g244 630 630 693 702,r258 576 621 645 645,r270 615 675 684 684,g284 639 639 693 708,r297 573 630 645 645,g311 597 597 666 669,g323 567 567 594 639,r336 528 558 597 597,g350 552 552 606 621,g363 480 480 513 552,r376 471 471 474 543,g390 417 417 465 489,g402 348 348 408 417,r416 291 339 363 363,g429 348 348 369 417,r443 339 339 408 408,r456 408 417 480 480,g468 456 456 495 528,g482 387 387 450 456,r495 363 369 432 432,g509 378 378 441 450,r522 324 366 393 393,g536 339 339 402 408,r549 315 315 387 387,g561 363 363 432 432,g575 276 276 339 348,g588 204 204 261 276,g602 141 141 198 213,g615 126 126 135 198,r627 111 111 180 180,r641 165 198 237 237,g654 189 189 261 261,r667 180 180 252 252,g681 204 204 261 276,r693 180 198 252 252,r706 243 261 315 315,g720 276 276 324 348,r734 267 267 270 339,r747 237 261 306 306,g759 261 261 324 330,r774 252 252 324 324,g786 291 291 348 363,r800 276 285 348 348,r813 330 354 402 402,g826 387 387 417 456,g839 354 354 378 426,r852 339 348 408 408,r866 408 417 480 480,r879 489 489 558 558,r892 567 567 639 639,g906 576 576 645 645,g918 495 495 567 567,g932 450 450 489 519,g945 417 417 441 489,r958 402 408 471 471,g972 417 417 480 489,g984 363 363 411 432,r997 330 354 402 402,g1011 339 339 408 408,g1024 291 291 330 363,r1038 285 285 354 354,r1050 345 360 408 408,g1064 348 348 417 417,g1077 324 324 339 393,g1090 267 267 315 339,g1104 117 117 174 189,g1116 24 24 96 96`,
    upper: '33,720 46,653 60,653 72,630 86,606 244,606 258,598 284,598 297,574 310,574 323,568 337,535 350,535 363,485 376,470 390,435 403,350 416,299 562,299 575,275 588,215 602,170 615,142 627,133 800,133 813,165 826,181 866,181 879,252 945,252 958,291 972,291 985,346 1011,346 1024,314 1077,314 1090,308 1104,130 1117,40',
    lower: '205,794 218,772 350,772 363,740 377,740 390,693 456,693 469,661 482,661 495,598 522,598 535,512 641,512 654,441 681,441 694,433 733,433 747,331 786,331 800,343 813,370 826,433 852,433 866,455 879,500 892,622 1077,622 1090,555 1104,512 1117,488 1144,488 1157,417 1170,409 1183,409 1196,402 1223,402 1236,394 1249,378 1262,315',
    mid: '152,669 311,669 323,590 337,590 350,582 495,582 509,420 522,355 535,378 654,378 667,212 839,212 852,315 892,315 906,307 918,362 958,362 971,409 998,409 1011,378 1024,378 1037,440 1051,338 1064,378 1077,362 1170,362 1183,339 1196,339 1209,362 1223,362' },
  { x: 1120, y: 380,
    bars: `g171 537 537 600 609,g183 489 489 522 561,g196 450 450 483 522,g210 381 381 411 450,r222 333 372 402 402,r237 396 426 465 465,g249 411 411 483 483,g262 339 339 387 411,g276 255 255 309 324,r289 246 246 318 318,g303 255 255 324 324,g315 198 198 246 270,g328 144 144 183 216,r341 90 135 159 159,r355 135 183 207 207,r368 198 222 270 270,g381 246 246 276 318,g394 198 198 231 270,r408 153 183 222 222,r421 198 231 270 270,g436 216 216 285 285,g448 207 207 210 276,g461 159 159 198 231,g474 96 96 153 168,r488 90 90 159 159,g501 159 159 168 231,r514 81 153 156 156,r527 105 168 174 174,r540 129 183 198 198,r554 207 207 276 276,g567 231 231 285 300,r579 219 222 285 285,r594 300 300 372 372,g606 324 324 387 390,r619 285 318 357 357,r631 363 363 366 435,r646 348 360 420 420,g660 366 366 435 435,g672 318 318 357 387,g685 255 255 309 324,g698 222 222 246 294,g712 192 192 216 261,r725 153 183 222 222,g738 183 183 231 255,g751 105 105 174 174,r765 57 96 129 129,g779 105 105 135 174,r791 66 96 135 135,g804 81 81 144 153,g818 9 9 72 81`,
    upper: '170,535 183,495 197,478 210,385 223,340 262,340 275,262 289,254 302,254 315,225 328,160 341,96 474,96 488,88 501,88 514,80 685,80 698,127 712,151 738,151 752,112 765,88 778,88 791,64 804,64 818,35',
    lower: '315,785 329,665 342,598 355,521 368,521 381,482 421,482 434,390 447,324 475,324 487,301 553,301 567,285 580,285 593,335 606,396 619,396 632,403 831,403 844,365 857,310 871,263 897,214 910,214 923,159 936,151 949,151 962,143 976,143 989,70',
    mid: '263,962 275,372 421,372 434,245 447,207 540,207 553,214 620,214 632,364 804,364' },
  { x: 1380, y: 160,
    bars: `g51 591 591 663 663,g64 552 552 567 624,g77 519 519 543 591,g90 489 489 504 561,r104 441 480 513 513,r117 489 519 561 561,g130 498 498 567 567,g144 426 426 489 498,r156 402 417 474 474,g171 450 450 480 519,g183 393 393 441 465,g196 324 324 387 393,r210 261 309 330 330,g223 498 498 543 591,g237 393 393 441 450,g249 330 330 363 402,r262 324 324 393 393,r276 372 402 441 441,r289 417 450 489 489,r303 474 513 543 543,g315 528 528 552 600,g328 456 456 513 528,r342 387 441 456 456,g355 393 393 465 465,r369 372 387 441 441,g381 393 393 450 465,r394 330 378 402 402,r408 402 426 474 474,r421 489 489 561 561,g435 513 513 567 582,g447 435 435 504 504,r462 402 426 474 474,r474 465 489 537 537,r488 552 552 624 624,g501 567 567 639 639,r513 543 552 615 615,g528 552 552 624 624,g540 474 474 543 543,g554 411 411 465 480,g567 339 339 402 411,r579 285 330 354 354,g594 291 291 363 363,r606 261 285 330 330,r621 300 372 375 375,r633 363 378 435 435,r646 417 486 489 489,r659 495 495 498 567,g672 417 417 423 489,r686 330 402 405 405,g699 378 378 417 450,g712 330 330 372 402,g726 252 252 324 324,r738 204 222 276 276,g751 222 222 282 291,g765 165 165 213 237,g778 87 87 159 159,r791 81 81 150 150,g804 111 111 159 183,r819 87 102 159 159,r831 135 165 204 204,r844 213 213 285 285,g857 246 246 291 315,r870 198 228 267 267,r884 276 291 348 348,g897 309 309 354 378,g910 237 237 300 309,g923 165 165 228 237,g936 96 96 159 165,r950 72 79 144 144,g963 81 81 150 150,r976 64 64 135 135,g989 126 126 144 198,r1003 111 120 183 183,r1017 198 198 267 267,r1029 222 276 291 291,r1042 300 300 363 363`,
    upper: '51,590 64,560 77,527 90,497 104,465 130,465 144,426 171,426 183,418 197,345 210,284 382,284 395,331 435,331 448,339 567,339 580,284 594,284 606,276 726,276 738,237 752,237 765,195 778,130 791,79 963,79 976,64 1043,64',
    lower: '222,637 236,612 249,575 263,551 275,544 302,544 315,583 474,583 488,614 659,614 672,606 699,606 712,567 831,567 844,480 857,450 870,450 884,385 897,362 1043,362',
    mid: '38,740 51,591 223,591 236,450 315,450 328,307 382,307 395,395 408,450 421,402 435,528 606,528 620,284 632,426 726,426 738,285 752,285 765,276 778,276 791,378 804,378 818,134 923,134 936,150 1030,150 1043,291' }
];
const view = { x: 43, y: 140, w: 1761, h: 887 };
const canvas = document.getElementById('canvas');
const ns = 'http://www.w3.org/2000/svg';

function add(tag, attrs) {
  const node = document.createElementNS(ns, tag);
  for (const name in attrs) node.setAttribute(name, attrs[name]);
  canvas.append(node);
}
function rect(x, y, width, height, fill) {
  add('rect', { x, y, width, height, fill });
}
function line(key, stroke, width) {
  const points = blocks.flatMap(b => b[key].split(' ').map(p => {
    const [x, y] = p.split(',').map(Number);
    const row = b.y + y / 3;
    return `${Math.floor(b.x + x / 3) + 0.5},${width % 2 ? Math.floor(row) + 0.5 : Math.round(row)}`;
  })).join(' ');
  add('polyline', { points, fill: 'none', stroke, 'stroke-width': width, 'vector-effect': 'non-scaling-stroke', 'stroke-linejoin': 'round' });
}

// Grid, time labels and price labels
const times = [[118, 'Jun 03 15:30'], [242, 'Jun 04 09:30'], [356, '15:30'], [475, 'Jun 05 09:00'], [621, '14:30'], [810, 'Jun 06 09:00'], [916, '14:30'], [1088, 'Jun 09 15:30'], [1436, 'Jun 10 17:00'], [1621, 'Jun 11 14:30']];
const timeAxis = document.getElementById('times');
times.forEach(([x, label], i) => {
  if (i) rect(x - 1, 141, 2, 886, '#ededed');
  const node = document.createElement('span');
  node.className = 'time';
  node.textContent = label;
  node.style.left = (x - view.x) / view.w * 100 + '%';
  timeAxis.append(node);
});
const priceAxis = document.getElementById('prices');
function priceLabel(y, text, cls) {
  const node = document.createElement('span');
  node.className = cls;
  node.textContent = text;
  node.style.top = (y - view.y) / view.h * 100 + '%';
  priceAxis.append(node);
}
for (let i = 0; i < 11; i++) {
  const y = Math.round(173 + i * 78.7);
  rect(44, y, 1756, 1, '#e6e6e6');
  priceLabel(y, (13.74 - i * 0.06).toFixed(3), 'price');
}
priceLabel(181, '13.734', 'tag tag-upper');
priceLabel(258, '13.676', 'tag tag-mid');
priceLabel(281, '13.658', 'tag tag-lower');

// Candles
for (const b of blocks) {
  for (const bar of b.bars.split(',')) {
    const fill = bar[0] === 'g' ? '#089981' : '#f23645';
    const [cx, high, top, bottom, low] = bar.slice(1).split(' ').map(Number);
    const row = v => Math.round(b.y + v / 3);
    const wick = Math.floor(b.x + cx / 3);
    const left = Math.max(44, Math.round(b.x + (cx - 6) / 3));
    const right = Math.round(b.x + (cx + 5) / 3);
    rect(wick, row(high), 1, Math.max(1, row(low) - row(high)), fill);
    rect(left, row(top), right - left, Math.max(1, row(bottom) - row(top)), fill);
  }
}
line('upper', '#26a69a', 1);
line('lower', '#ff5252', 1);
line('mid', '#64a4f4', 2);
```
